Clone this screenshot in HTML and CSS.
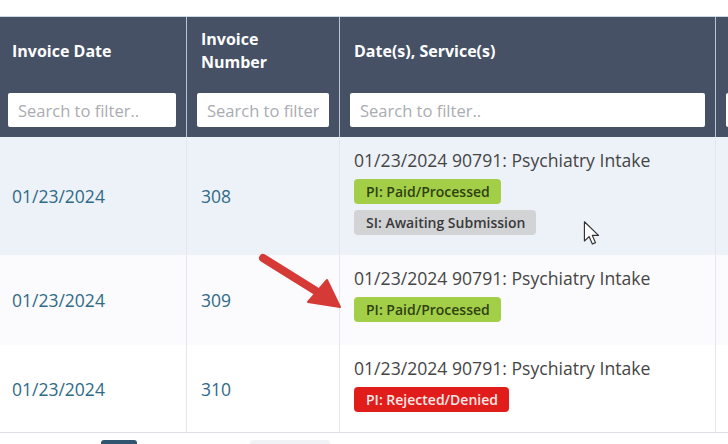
FILE: index.html
```html
<!DOCTYPE html>
<html lang="en">
<head>
<meta charset="utf-8">
<title>Invoices</title>
<link rel="stylesheet" href="styles.css">
</head>
<body>
<div class="page">
  <div class="grid">
    <div class="th c1">
      <div class="title">Invoice Date</div>
      <input class="filter" type="text" placeholder="Search to filter..">
    </div>
    <div class="th">
      <div class="title">Invoice<br>Number</div>
      <input class="filter" type="text" placeholder="Search to filter..">
    </div>
    <div class="th">
      <div class="title">Date(s), Service(s)</div>
      <input class="filter" type="text" placeholder="Search to filter..">
    </div>
    <div class="th last">
      <div class="title">&nbsp;</div>
      <input class="filter" type="text" placeholder="">
    </div>

    <div class="td c1 r1"><a class="link">01/23/2024</a></div>
    <div class="td r1"><a class="link">308</a></div>
    <div class="td svc r1">
      <div class="line">01/23/2024 90791: Psychiatry Intake</div>
      <span class="badge green">PI: Paid/Processed</span>
      <span class="badge grey">SI: Awaiting Submission</span>
    </div>
    <div class="td last r1"></div>

    <div class="td c1 r2"><a class="link">01/23/2024</a></div>
    <div class="td r2"><a class="link">309</a></div>
    <div class="td svc r2">
      <div class="line">01/23/2024 90791: Psychiatry Intake</div>
      <span class="badge green">PI: Paid/Processed</span>
    </div>
    <div class="td last r2"></div>

    <div class="td c1 r3"><a class="link">01/23/2024</a></div>
    <div class="td r3"><a class="link">310</a></div>
    <div class="td svc r3">
      <div class="line">01/23/2024 90791: Psychiatry Intake</div>
      <span class="badge red">PI: Rejected/Denied</span>
    </div>
    <div class="td last r3"></div>
  </div>
  <div class="pager">
    <span class="pg active"></span>
    <span class="pg light"></span>
  </div>

  <svg class="arrow" width="100" height="70" viewBox="0 0 100 70">
    <line x1="13" y1="13" x2="66" y2="46" stroke="#d63a36" stroke-width="8" stroke-linecap="round"/>
    <polygon points="90,62 58,57 77,35" fill="#d63a36" stroke="#d63a36" stroke-width="2" stroke-linejoin="round"/>
  </svg>

  <svg class="cursor" width="20" height="28" viewBox="0 0 16 24">
    <path d="M1.5 1.5 L1.5 18 L5.5 14.2 L8.3 20.6 L11 19.4 L8.3 13.2 L13.6 13.2 Z" fill="#ffffff" stroke="#333" stroke-width="1" stroke-linejoin="round"/>
  </svg>
</div>
</body>
</html>
```

FILE: styles.css
```css
html, body {
  margin: 0;
  padding: 0;
  background: #ffffff;
  overflow: hidden;
}
body {
  font-family: "Open Sans", "Noto Sans", "Liberation Sans", sans-serif;
  width: 728px;
  height: 444px;
}
.page {
  position: relative;
  padding-top: 16px;
  margin-left: -2px;
  width: 730px;
}
.grid {
  display: grid;
  grid-template-columns: 189px 153px 376px 12px;
  border-top: 1px solid #cdd5e0;
  border-bottom: 1px solid #dcdfe3;
}
.th {
  background: #465166;
  border-right: 1px solid #b9c3d1;
  padding: 0 10px 10px 10px;
  display: flex;
  flex-direction: column;
  height: 120px;
  box-sizing: border-box;
}
.th .title {
  height: 68px;
  display: flex;
  align-items: center;
  padding-left: 4px;
  color: #ffffff;
  font-weight: 700;
  font-size: 16px;
  line-height: 23px;
}
.th .filter {
  margin-top: 8px;
  height: 34px;
  width: 100%;
  box-sizing: border-box;
  border: none;
  border-radius: 2px;
  background: #ffffff;
  padding: 0 10px;
  font-family: inherit;
  font-size: 16.5px;
  color: #333;
}
.th .filter::placeholder {
  color: #a9acb1;
}
.th.last {
  border-right: none;
  padding-right: 0;
}
.td {
  border-right: 1px solid #e4e7ec;
  padding-left: 14px;
  display: flex;
  align-items: center;
  box-sizing: border-box;
}
.td.last {
  border-right: none;
}
.link {
  color: #2f6a87;
  font-size: 17.5px;
}
.svc {
  display: flex;
  flex-direction: column;
  align-items: flex-start;
  justify-content: flex-start;
  padding: 12px 10px 21px 14px;
}
.line {
  font-size: 17.6px;
  line-height: 22px;
  color: #454545;
  margin-bottom: 8px;
  white-space: nowrap;
}
.badge {
  display: inline-block;
  height: 25px;
  line-height: 25px;
  padding: 0 11px 0 12px;
  border-radius: 4px;
  font-size: 14px;
  font-weight: 600;
}
.badge + .badge {
  margin-top: 6px;
}
.green {
  background: #a3cf48;
  color: #2f4112;
}
.grey {
  background: #d2d3d5;
  color: #3a3a3a;
}
.red {
  background: #e11d1b;
  color: #fde9e6;
}
.r1 {
  background: #edf2f9;
  height: 118px;
}
.r2 {
  background: #fbfafc;
  height: 90px;
}
.r3 {
  background: #ffffff;
  height: 87px;
}
.pager {
  display: flex;
  margin-top: 7px;
  padding-left: 103px;
  gap: 113px;
}
.pg {
  display: block;
  height: 20px;
  border-radius: 3px;
}
.pg.active {
  width: 36px;
  background: #2f5570;
}
.pg.light {
  width: 80px;
  background: #f1f2f5;
}
.arrow {
  position: absolute;
  left: 252px;
  top: 245px;
}
.cursor {
  position: absolute;
  left: 584px;
  top: 220px;
}
```
